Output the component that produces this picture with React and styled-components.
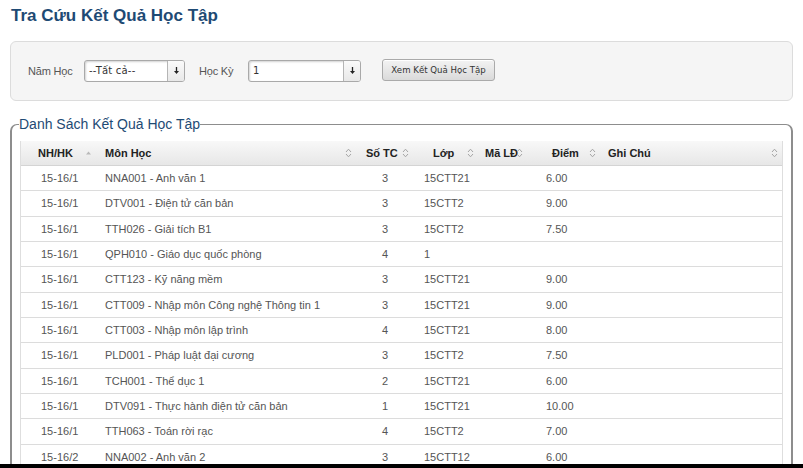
import React from "react";
import styled, { createGlobalStyle } from "styled-components";

const Global = createGlobalStyle`
  html, body { margin: 0; padding: 0; background: #fff; }
  body { font-family: "Liberation Sans", Arial, sans-serif; }
  * { box-sizing: border-box; }
`;

const Page = styled.div`
  height: 464px;
  overflow: hidden;
  padding: 0 10px;
`;

const BottomBar = styled.div`
  height: 4px;
  background: #000;
`;

const Title = styled.h1`
  margin: 0;
  padding: 6px 0 0 1px;
  height: 41px;
  font-size: 17px;
  font-weight: bold;
  color: #1e4a74;
`;

const FilterPanel = styled.div`
  height: 60px;
  border: 1px solid #dcdcdc;
  border-radius: 6px;
  background: #f5f5f5;
  display: flex;
  align-items: center;
  padding: 0 0 0 17px;
`;

const Label = styled.span`
  width: ${(p) => p.$w}px;
  font-size: 11px;
  letter-spacing: -0.2px;
  color: #555;
  white-space: nowrap;
  margin-right: ${(p) => p.$gap}px;
`;

const Select = styled.div`
  width: ${(p) => p.$w}px;
  height: 22px;
  margin-top: -1px;
  border: 1px solid #a9a9a9;
  border-radius: 3px;
  background: #fff;
  display: flex;
  margin-right: ${(p) => p.$gap}px;
  box-shadow: inset 1px 1px 2px rgba(0, 0, 0, 0.18);
  overflow: hidden;
`;

const SelectText = styled.div`
  flex: 1;
  font-family: "DejaVu Sans", Verdana, sans-serif;
  font-size: 10px;
  letter-spacing: 0.2px;
  color: #333;
  display: flex;
  align-items: center;
  padding-left: 4px;
`;

const SelectArrow = styled.div`
  width: 17px;
  border-left: 1px solid #b5b5b5;
  background: linear-gradient(#fafafa, #e8e8e8);
  display: flex;
  align-items: center;
  justify-content: center;
`;

const Button = styled.button`
  width: 113px;
  height: 22px;
  margin-top: -2px;
  border: 1px solid #aaa;
  border-radius: 3px;
  background: linear-gradient(#f3f3f3, #dadada);
  font-family: "DejaVu Sans", Verdana, sans-serif;
  font-size: 8.6px;
  color: #333;
  padding: 0;
  box-shadow: inset 0 1px 0 #fff;
`;

const Fieldset = styled.fieldset`
  margin: 15px 0 0 0;
  padding: 0 8px 0 8px;
  border-style: solid;
  border-color: #8d8d8d;
  border-width: 1px 2px 2px 2px;
  border-radius: 7px 7px 0 0;
  min-width: 0;
`;

const Legend = styled.legend`
  padding: 0;
  margin-left: -1px;
  font-size: 14px;
  color: #1e4a74;
  line-height: 17px;
`;

const Table = styled.div`
  margin-top: 8px;
  border-left: 1px solid #dedede;
  border-right: 1px solid #dedede;
`;

const cols = "77px 261px 54px 65px 50px 73px 1fr";

const HeadRow = styled.div`
  display: grid;
  grid-template-columns: ${cols};
  height: 25px;
  background: linear-gradient(#f8f8f8, #e7e7e7);
  border-bottom: 1px solid #d4d4d4;
`;

const Th = styled.div`
  position: relative;
  display: flex;
  align-items: center;
  padding-left: ${(p) => p.$pad}px;
  font-size: 11px;
  font-weight: bold;
  color: #222;
`;

const SortIcon = styled.svg`
  position: absolute;
  right: ${(p) => p.$right}px;
  top: 50%;
  transform: translateY(-50%);
`;

const Row = styled.div`
  display: grid;
  grid-template-columns: ${cols};
  height: 25.33px;
  border-bottom: 1px solid #dcdcdc;
  background: #fff;
`;

const Td = styled.div`
  display: flex;
  align-items: center;
  padding-left: ${(p) => p.$pad}px;
  font-size: 11px;
  color: #555;
  white-space: nowrap;
`;

const ArrowDown = () => (
  <svg width="7" height="9" viewBox="0 0 7 9">
    <path d="M3.5 1 V6" stroke="#222" strokeWidth="1.3" />
    <path d="M1 5 L3.5 8 L6 5 Z" fill="#222" />
  </svg>
);

const Carets = ({ right }) => (
  <SortIcon $right={right} width="7" height="10" viewBox="0 0 7 10">
    <path d="M1 4 L3.5 1.2 L6 4" fill="none" stroke="#a5a5a5" strokeWidth="1" />
    <path d="M1 6 L3.5 8.8 L6 6" fill="none" stroke="#a5a5a5" strokeWidth="1" />
  </SortIcon>
);

const Asc = ({ right }) => (
  <SortIcon $right={right} width="7" height="5" viewBox="0 0 7 5">
    <path d="M1 4 L3.5 1 L6 4 Z" fill="#b9b9b9" />
  </SortIcon>
);

const headers = [
  { t: "NH/HK", pad: 17, icon: "asc", r: 6 },
  { t: "Môn Học", pad: 7, r: 7 },
  { t: "Số TC", pad: 7, r: 4 },
  { t: "Lớp", pad: 20, r: 4 },
  { t: "Mã LĐ", pad: 7, r: 5 },
  { t: "Điểm", pad: 24, r: 5 },
  { t: "Ghi Chú", pad: 7, r: 4 },
];

const dataPads = [20, 7, 23, 11, 7, 18, 7];

const rows = [
  ["15-16/1", "NNA001 - Anh văn 1", "3", "15CTT21", "", "6.00", ""],
  ["15-16/1", "DTV001 - Điện tử căn bản", "3", "15CTT2", "", "9.00", ""],
  ["15-16/1", "TTH026 - Giải tích B1", "3", "15CTT2", "", "7.50", ""],
  ["15-16/1", "QPH010 - Giáo dục quốc phòng", "4", "1", "", "", ""],
  ["15-16/1", "CTT123 - Kỹ năng mềm", "3", "15CTT21", "", "9.00", ""],
  ["15-16/1", "CTT009 - Nhập môn Công nghệ Thông tin 1", "3", "15CTT21", "", "9.00", ""],
  ["15-16/1", "CTT003 - Nhập môn lập trình", "4", "15CTT21", "", "8.00", ""],
  ["15-16/1", "PLD001 - Pháp luật đại cương", "3", "15CTT2", "", "7.50", ""],
  ["15-16/1", "TCH001 - Thể dục 1", "2", "15CTT21", "", "6.00", ""],
  ["15-16/1", "DTV091 - Thực hành điện tử căn bản", "1", "15CTT21", "", "10.00", ""],
  ["15-16/1", "TTH063 - Toán rời rạc", "4", "15CTT2", "", "7.00", ""],
  ["15-16/2", "NNA002 - Anh văn 2", "3", "15CTT12", "", "6.00", ""],
];

export default function App() {
  return (
    <>
      <Global />
      <Page>
        <Title>Tra Cứu Kết Quả Học Tập</Title>
        <FilterPanel>
          <Label $w={42} $gap={14}>Năm Học</Label>
          <Select $w={101} $gap={14}>
            <SelectText>--Tất cả--</SelectText>
            <SelectArrow>
              <ArrowDown />
            </SelectArrow>
          </Select>
          <Label $w={34} $gap={15}>Học Kỳ</Label>
          <Select $w={113} $gap={21}>
            <SelectText>1</SelectText>
            <SelectArrow>
              <ArrowDown />
            </SelectArrow>
          </Select>
          <Button>Xem Kết Quả Học Tập</Button>
        </FilterPanel>
        <Fieldset>
          <Legend>Danh Sách Kết Quả Học Tập</Legend>
          <Table>
            <HeadRow>
              {headers.map((h) => (
                <Th key={h.t} $pad={h.pad}>
                  {h.t}
                  {h.icon === "asc" ? <Asc right={h.r} /> : <Carets right={h.r} />}
                </Th>
              ))}
            </HeadRow>
            {rows.map((r, i) => (
              <Row key={i}>
                {r.map((c, j) => (
                  <Td key={j} $pad={dataPads[j]}>
                    {c}
                  </Td>
                ))}
              </Row>
            ))}
          </Table>
        </Fieldset>
      </Page>
      <BottomBar />
    </>
  );
}
